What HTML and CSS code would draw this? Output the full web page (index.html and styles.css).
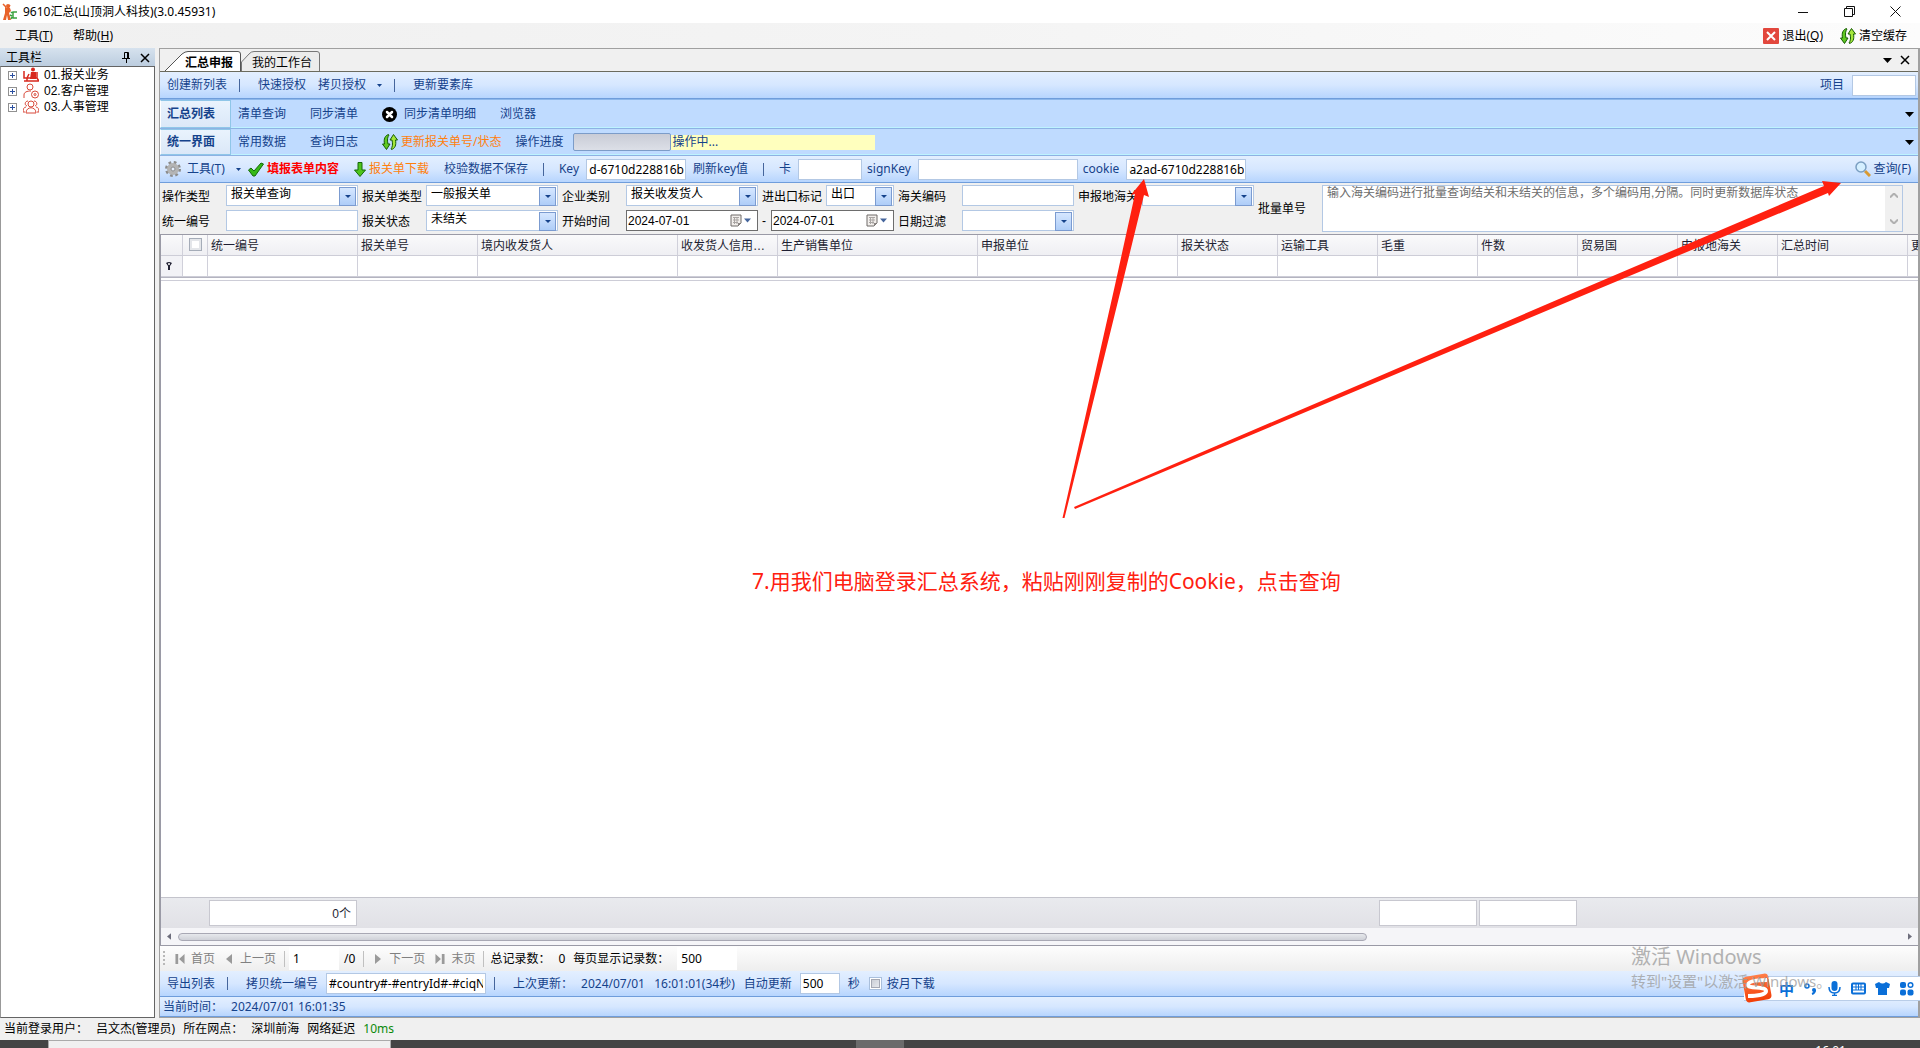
FILE: index.html
```html
<!DOCTYPE html>
<html lang="zh-CN">
<head>
<meta charset="utf-8">
<title>9610汇总(山顶洞人科技)(3.0.45931)</title>
<link rel="stylesheet" href="styles.css">
</head>
<body>
<svg class="defs" aria-hidden="true">
  <defs>
    <linearGradient id="tile" x1="0" y1="0" x2="0" y2="1"><stop offset="0" stop-color="#ff7f4a"/><stop offset="1" stop-color="#f23d06"/></linearGradient>
    <symbol id="refresh" viewBox="0 0 16 16">
      <path d="M6.500 .5C3 1.500 1.500 5 2.500 10H.5L4.500 15.500L8 10H6C5 6 5.500 3 7 1Z" fill="#5fc921" stroke="#175c05"/>
      <path d="M9.500 15.500C13 14.500 14.500 11 13.500 6H15.500L11.500 .5L8 6H10C11 10 10.500 13 9 15Z" fill="#a4e63a" stroke="#175c05"/>
    </symbol>
    <symbol id="caret" viewBox="0 0 9 5"><path d="M0 0H9L4.500 5Z" fill="currentColor"/></symbol>
    <symbol id="cross" viewBox="0 0 10 10"><path d="M1 1L9 9M9 1L1 9" stroke="currentColor" stroke-width="1.500" fill="none"/></symbol>
    <symbol id="left" viewBox="0 0 6 10"><path d="M6 0V10L0 5Z" fill="currentColor"/></symbol>
    <symbol id="right" viewBox="0 0 6 10"><path d="M0 0V10L6 5Z" fill="currentColor"/></symbol>
    <symbol id="first" viewBox="0 0 10 11"><path d="M0 0H3V11H0ZM10 0V11L4 5.500Z" fill="currentColor"/></symbol>
    <symbol id="last" viewBox="0 0 10 11"><path d="M7 0H10V11H7ZM0 0V11L6 5.500Z" fill="currentColor"/></symbol>
    <symbol id="calendar" viewBox="0 0 12 13">
      <path d="M1 1H11V9L8 12H1Z" fill="#f2efec" stroke="#6f6a68"/><path d="M3 3.500H9M3 6H9M3 8.500H8M4.500 3V10M7 3V10" stroke="#a9a5a3" fill="none"/><path d="M8 12V9H11Z" fill="#8b8684"/>
    </symbol>
  </defs>
</svg>

<header class="titlebar">
  <svg class="app-icon" viewBox="0 0 16 18"><path d="M1 1L4 4M8 2L6 5" stroke="#e8622a" stroke-width="1.500"/><circle cx="6" cy="3" r="2" fill="#e8622a"/><path d="M3 4L8 5L9 8L7 10L9 17H6L5 12L4 17H1L3 10Z" fill="#e8622a"/><path d="M9 9L10 10M8 12L10 13M9 16L10 14M15 9H11V15H15" fill="none" stroke="#3aa33f" stroke-width="1.500"/></svg>
  <h1>9610汇总(山顶洞人科技)(3.0.45931)</h1>
  <button class="win" aria-label="最小化"><svg viewBox="0 0 11 11"><path d="M0 6.500H10" stroke="#111"/></svg></button>
  <button class="win" aria-label="还原"><svg viewBox="0 0 11 11"><path d="M.5 2.500H8.500V10.500H.5ZM2.500 2.500V.5H10.500V8.500H8.500" fill="none" stroke="#111"/></svg></button>
  <button class="win" aria-label="关闭"><svg viewBox="0 0 11 11"><path d="M.5 .5L10.500 10.500M10.500 .5L.5 10.500" stroke="#111"/></svg></button>
</header>

<nav class="menubar">
  <button>工具(<u>T</u>)</button>
  <button>帮助(<u>H</u>)</button>
  <span class="fill"></span>
  <button class="with-icon"><svg class="i16" viewBox="0 0 16 16"><rect width="16" height="16" rx="1" fill="#e2473d"/><path d="M4 4L12 12M12 4L4 12" stroke="#fff" stroke-width="2"/></svg>退出(<u>Q</u>)</button>
  <button class="with-icon"><svg class="i16"><use href="#refresh"/></svg>清空缓存</button>
</nav>

<div class="workspace">
  <aside class="dock">
    <div class="dock-head">
      <h2>工具栏</h2>
      <button aria-label="固定"><svg class="pin" viewBox="0 0 8 12"><path d="M2.500 .5H6.500V6.500H2.500ZM5.500 .5V6M0 6.500H8M4.500 7V11" fill="none" stroke="#000"/></svg></button>
      <button aria-label="关闭工具栏"><svg class="i10"><use href="#cross"/></svg></button>
    </div>
    <ul class="tree">
      <li><i class="expander"></i><svg class="i16" viewBox="0 0 16 16"><path d="M1 4V11H4V14H1M6 7L4 11H14L16 14H3M14 5V11" fill="none" stroke="#d8281e" stroke-width="1.500"/><circle cx="10" cy="2.500" r="2" fill="#d8281e"/><path d="M8 5H13L13 12H7Z" fill="#d8281e"/></svg><a href="#">01.报关业务</a></li>
      <li><i class="expander"></i><svg class="i16" viewBox="0 0 16 16"><g fill="none" stroke="#d8493a"><circle cx="7" cy="4" r="3"/><path d="M1 15V12C1 9 4 8 8 8"/><circle cx="12" cy="11.500" r="3.500"/><circle cx="12" cy="11.500" r="1"/></g></svg><a href="#">02.客户管理</a></li>
      <li><i class="expander"></i><svg class="i16" viewBox="0 0 16 16"><g fill="none" stroke="#d8493a"><circle cx="8" cy="5" r="3"/><path d="M3 14C3 7 13 7 13 14ZM4 7C1 6 2 2 5 2M12 7C15 6 14 2 11 2M2 13H0C0 10 1 8 3 8M14 13H16C16 10 15 8 13 8"/></g></svg><a href="#">03.人事管理</a></li>
    </ul>
  </aside>

  <main class="panel">
    <div class="doc-tabs">
      <button class="doc-tab doc-on"><svg viewBox="0 0 76 20" aria-hidden="true"><path d="M0 20L17 3Q20 .5 23 .5H73Q75.500 .5 75.500 3V20" fill="#fff" stroke="#555"/></svg><span>汇总申报</span></button>
      <button class="doc-tab"><svg viewBox="0 0 79 20" aria-hidden="true"><path d="M.5 20V11L8 3Q10 .5 13 .5H76Q78.500 .5 78.500 3V20" fill="#ececec" stroke="#777"/></svg><span>我的工作台</span></button>
      <span class="fill"></span>
      <button aria-label="窗口列表"><svg class="caret-big"><use href="#caret"/></svg></button>
      <button aria-label="关闭标签"><svg class="i10"><use href="#cross"/></svg></button>
    </div>

    <div class="bar bar-top">
      <button>创建新列表</button><i class="sep"></i>
      <button>快速授权</button>
      <button class="drop">拷贝授权<svg class="caret-sm"><use href="#caret"/></svg></button><i class="sep"></i>
      <button>更新要素库</button>
      <span class="fill"></span>
      <label for="project">项目</label><input id="project" class="box w64">
    </div>

    <div class="strip">
      <button class="sub-on">汇总列表</button>
      <button>清单查询</button>
      <button>同步清单</button>
      <button class="icon-gap"><svg class="i15" viewBox="0 0 15 15"><circle cx="7.500" cy="7.500" r="7.500" fill="#000"/><path d="M5 5L10 10M10 5L5 10" stroke="#fff" stroke-width="2.500" stroke-linecap="round"/></svg>同步清单明细</button>
      <button>浏览器</button>
      <span class="fill"></span>
      <svg class="caret-big"><use href="#caret"/></svg>
    </div>

    <div class="strip strip-low">
      <button class="sub-on">统一界面</button>
      <button>常用数据</button>
      <button>查询日志</button>
      <button class="icon-tight orange"><svg class="i16"><use href="#refresh"/></svg>更新报关单号/状态</button>
      <div class="progress"><span>操作进度</span><i class="meter"></i><output>操作中...</output></div>
      <span class="fill"></span>
      <svg class="caret-big"><use href="#caret"/></svg>
    </div>

    <div class="bar bar-tools">
      <button class="icon-six"><svg class="i16" viewBox="0 0 16 16"><circle cx="8" cy="8" r="6.500" fill="none" stroke="#8c8c8c" stroke-width="3" stroke-dasharray="2.600 2.500"/><circle cx="8" cy="8" r="4" fill="none" stroke="#b4b4b4" stroke-width="4"/><circle cx="8" cy="8" r="2" fill="#e6f0ff" stroke="#8c8c8c"/></svg>工具(T)<svg class="caret-sm"><use href="#caret"/></svg></button>
      <button class="icon-tight red tool-lead"><svg class="i16" viewBox="0 0 16 16"><path d="M.5 9L3 7L6 10L13 2L15.500 3L7 15H5Z" fill="#35b916" stroke="#14690a"/></svg>填报表单内容</button>
      <button class="icon-tight orange tool-mid"><svg class="i12" viewBox="0 0 12 15"><path d="M4 .5H8V8H11.500L6 14.500L.5 8H4Z" fill="#4fc51c" stroke="#14690a"/></svg>报关单下载</button>
      <button class="tool-mid">校验数据不保存</button><i class="sep tool-mid"></i>
      <label for="key" class="tool-mid">Key</label><input id="key" class="box w100 tail" value="ad-6710d228816b">
      <button>刷新key值</button><i class="sep tool-mid"></i>
      <label for="card" class="tool-mid">卡</label><input id="card" class="box w64">
      <label for="sign">signKey</label><input id="sign" class="box w160">
      <label for="cookie">cookie</label><input id="cookie" class="box w120 tail" value="ba2ad-6710d228816b">
      <span class="fill"></span>
      <button class="icon-tight"><svg class="i16" viewBox="0 0 16 16"><path d="M10 10L15 15" stroke="#d99a32" stroke-width="3"/><circle cx="6" cy="6" r="5" fill="#d5efff" stroke="#7b9fc2" stroke-width="1.500"/></svg>查询(F)</button>
    </div>

    <form class="filters">
      <label class="c1" for="op">操作类型</label>
      <span class="combo c2"><select id="op"><option>报关单查询</option></select></span>
      <label class="c3" for="kind">报关单类型</label>
      <span class="combo c4"><select id="kind"><option>一般报关单</option></select></span>
      <label class="c5" for="corp">企业类别</label>
      <span class="combo c6"><select id="corp"><option>报关收发货人</option></select></span>
      <label class="c7" for="ie">进出口标记</label>
      <span class="combo c8"><select id="ie"><option>出口</option></select></span>
      <label class="c9" for="hs">海关编码</label>
      <input class="box c10" id="hs">
      <label class="c11" for="port">申报地海关</label>
      <span class="combo c12"><select id="port"><option></option></select></span>

      <label class="c1 low" for="no">统一编号</label>
      <input class="box c2 low" id="no">
      <label class="c3 low" for="state">报关状态</label>
      <span class="combo c4 low"><select id="state"><option>未结关</option></select></span>
      <label class="c5 low" for="from">开始时间</label>
      <span class="date c6 low"><input id="from" value="2024-07-01"><svg class="cal"><use href="#calendar"/></svg><svg class="caret-date"><use href="#caret"/></svg></span>
      <span class="dash low">-</span>
      <span class="date until low"><input aria-label="结束时间" value="2024-07-01"><svg class="cal"><use href="#calendar"/></svg><svg class="caret-date"><use href="#caret"/></svg></span>
      <label class="c9 low" for="filter">日期过滤</label>
      <span class="combo c10 low"><select id="filter"><option></option></select></span>

      <label class="c13" for="batch">批量单号</label>
      <div class="batch">
        <textarea id="batch" placeholder="输入海关编码进行批量查询结关和未结关的信息，多个编码用,分隔。同时更新数据库状态"></textarea>
        <span class="vscroll"><svg viewBox="0 0 8 5"><path d="M0 4.500L4 .5L8 4.500" fill="none" stroke="#b0b0b0" stroke-width="2"/></svg><svg viewBox="0 0 8 5"><path d="M0 .5L4 4.500L8 .5" fill="none" stroke="#b0b0b0" stroke-width="2"/></svg></span>
      </div>
    </form>

    <section class="grid">
      <table>
        <colgroup><col class="k22"><col class="k25"><col class="k150"><col class="k120"><col class="k200"><col class="k100"><col class="k200"><col class="k200"><col class="k100"><col class="k100"><col class="k100"><col class="k100"><col class="k100"><col class="k100"><col class="k130"><col></colgroup>
        <thead><tr><th></th><th class="tick-cell"><input type="checkbox" class="tick" aria-label="全选"></th><th>统一编号</th><th>报关单号</th><th>境内收发货人</th><th>收发货人信用等级</th><th>生产销售单位</th><th>申报单位</th><th>报关状态</th><th>运输工具</th><th>毛重</th><th>件数</th><th>贸易国</th><th>申报地海关</th><th>汇总时间</th><th class="cut">更</th></tr></thead>
        <tbody><tr><td class="mark"><svg viewBox="0 0 6 8"><path d="M0 1Q3 -1 6 1L4 4V8H2V4Z" fill="#223"/><circle cx="3" cy="2" r="1" fill="#fff"/></svg></td><td></td><td></td><td></td><td></td><td></td><td></td><td></td><td></td><td></td><td></td><td></td><td></td><td></td><td></td><td></td></tr></tbody>
      </table>
      <div class="rows"></div>
      <div class="totals"><span class="sum s1">0个</span><span class="sum s2"></span><span class="sum s3"></span></div>
      <div class="hscroll"><svg class="arrow"><use href="#left"/></svg><div class="track"><i></i></div><svg class="arrow"><use href="#right"/></svg></div>
    </section>

    <div class="pager">
      <i class="grip"></i>
      <button disabled class="near"><svg class="i10"><use href="#first"/></svg>首页</button>
      <button disabled><svg class="i6"><use href="#left"/></svg>上一页</button><i class="rule"></i>
      <input class="page" aria-label="页码" value="1"><span class="of">/0</span><i class="rule"></i>
      <button disabled><svg class="i6"><use href="#right"/></svg>下一页</button>
      <button disabled class="near"><svg class="i10"><use href="#last"/></svg>末页</button><i class="rule"></i>
      <span class="total">总记录数：</span><span class="total">0</span>
      <label for="size">每页显示记录数：</label><input id="size" class="size" value="500">
    </div>

    <div class="bar bar-export">
      <button>导出列表</button><i class="sep"></i>
      <button>拷贝统一编号</button>
      <input class="box w160" aria-label="编号格式" value="#country#-#entryId#-#ciqNo#"><i class="sep"></i>
      <span>上次更新：</span><span class="stamp">2024/07/01&nbsp;&nbsp; 16:01:01(34秒)</span>
      <label for="auto">自动更新</label><input id="auto" class="box w40" value="500"><span class="unit">秒</span>
      <label class="check"><input type="checkbox" class="tick tick-gray">按月下载</label>
    </div>
    <div class="bar bar-clock"><span>当前时间：</span><time>2024/07/01 16:01:35</time></div>
  </main>
</div>

<footer class="status"><span>当前登录用户：</span><span>吕文杰(管理员)</span><span>所在网点：</span><span>深圳前海</span><span>网络延迟</span><span class="green">10ms</span></footer>
<div class="taskbar"><i class="search"></i><i class="app"></i><time>16:01</time></div>

<svg class="arrows" viewBox="0 0 1920 1048" aria-hidden="true"><path d="M1062.500 518L1115 285L1135 194L1131 195L1144 179L1149 197L1144 195L1122 285L1064.500 518Z" fill="#ff2010"/><path d="M1074 507L1580 290L1824 186L1822 181L1841 183L1829 196L1828 193L1596 290L1075 509Z" fill="#ff2010"/></svg>
<p class="note">7.用我们电脑登录汇总系统，粘贴刚刚复制的Cookie，点击查询</p>

<div class="ime">
  <svg class="sogou" viewBox="0 0 31 31"><rect x="2" y="2" width="26" height="26" rx="4" transform="rotate(-10 15 15)" fill="url(#tile)"/><path d="M25 7C15 7 6 8 6 12C6 16 24 13 24 18C24 22 14 23 6 23" fill="none" stroke="#fff" stroke-width="4"/></svg>
  <b>中</b>
  <svg class="i15" viewBox="0 0 15 15"><circle cx="4" cy="5" r="2" fill="none" stroke="#0a6fd8" stroke-width="1.500"/><circle cx="11" cy="9" r="2" fill="#0a6fd8"/><path d="M12 9Q12 12 9 13" stroke="#0a6fd8" stroke-width="2" fill="none"/></svg>
  <svg class="i15" viewBox="0 0 15 15"><rect x="4.500" width="6" height="10" rx="3" fill="#0a6fd8"/><path d="M2 6Q2 12 7.500 12Q13 12 13 6M7.500 12V15M5 14.500H10" stroke="#0a6fd8" stroke-width="1.500" fill="none"/></svg>
  <svg class="i15" viewBox="0 0 15 15"><rect x="1" y="2.500" width="13" height="10" rx="1" fill="#fff" stroke="#0a6fd8" stroke-width="2"/><path d="M2 6H13M2 9H13M5 3V9M7.500 3V9M10 3V9" stroke="#0a6fd8"/></svg>
  <svg class="i15" viewBox="0 0 15 15"><path d="M4 1Q7.500 4 11 1L15 3L14 7H12V14H3V7H1L0 3Z" fill="#0a6fd8"/></svg>
  <svg class="i15" viewBox="0 0 15 15"><g fill="#0a6fd8"><rect x="1" y="1" width="6" height="6" rx="2"/><rect x="1" y="8.500" width="6" height="6" rx="2"/><rect x="8.500" y="8.500" width="6" height="6" rx="2"/></g><circle cx="11.500" cy="4" r="2.300" fill="none" stroke="#0a6fd8" stroke-width="1.500"/></svg>
</div>
<div class="watermark"><strong>激活 Windows</strong><span>转到"设置"以激活 Windows。</span></div>
</body>
</html>
```
FILE: styles.css
```css
* { box-sizing: border-box; }
html, body { height: 100%; }
body {
  margin: 0; position: relative; overflow: hidden;
  display: flex; flex-direction: column;
  background: #f0f0f0; color: #000;
  font: 12px/16px "Noto Sans", "Noto Sans CJK SC", sans-serif;
}
h1, h2, p, ul { margin: 0; padding: 0; font: inherit; }
button { border: 0; padding: 0; background: none; color: inherit; font: inherit; white-space: nowrap; display: flex; align-items: center; }
input, select, textarea { margin: 0; font: inherit; color: #000; border-radius: 0; min-width: 0; }
a { color: inherit; text-decoration: none; }
i { display: block; font-style: normal; }
svg { display: block; flex: none; }
span, label { white-space: nowrap; }
.defs { position: absolute; width: 0; height: 0; }
.fill { flex: 1; }
.i6 { width: 6px; height: 10px; }
.i10 { width: 10px; height: 10px; }
.i12 { width: 12px; height: 15px; }
.i15 { width: 15px; height: 15px; }
.i16 { width: 16px; height: 16px; }
.caret-big { width: 9px; height: 5px; color: #000; }
.caret-sm { width: 5px; height: 3px; margin-left: 11px; }

/* window frame */
.titlebar { flex: none; height: 23px; display: flex; align-items: center; background: #fff; padding: 0 2px; }
.titlebar h1 { flex: 1; }
.app-icon { width: 16px; height: 18px; margin-right: 5px; }
.win { width: 46px; height: 22px; justify-content: center; }
.win svg { width: 11px; height: 11px; }
.menubar { flex: none; height: 25px; display: flex; align-items: center; gap: 20px; padding: 0 13px 0 15px; background: linear-gradient(90deg, #f0f0f0, #f4f4f4 50%, #fcfcfc); }
.with-icon svg { margin-right: 3px; }
.menubar .with-icon + .with-icon { margin-left: -3px; }
.workspace { flex: 1; min-height: 0; display: flex; gap: 4px; }

/* docked tool tree */
.dock { flex: none; width: 155px; display: flex; flex-direction: column; }
.dock-head { height: 18px; display: flex; align-items: center; gap: 10px; padding: 2px 5px 0 6px; background: linear-gradient(#d6e2ee, #bccddf); }
.dock-head h2 { flex: 1; }
.pin { width: 8px; height: 12px; }
.tree { flex: 1; list-style: none; background: #fff; border: 1px solid #646464; border-left-color: #999; font-family: "Liberation Sans", "Noto Sans CJK SC", sans-serif; }
.tree li { height: 16px; display: flex; align-items: center; padding-left: 7px; }
.tree a { margin-left: 5px; }
.expander { width: 9px; height: 9px; margin-right: 6px; border: 1px solid #919191; background: linear-gradient(#2b4fa0, #2b4fa0) center / 5px 1px no-repeat, linear-gradient(#2b4fa0, #2b4fa0) center / 1px 5px no-repeat, #fff; }

/* document panel */
.panel { flex: 1; min-width: 0; display: flex; flex-direction: column; border: 1px solid #a0a0a0; border-right-width: 2px; color: #15428b; }
.doc-tabs { flex: none; height: 23px; display: flex; align-items: center; padding: 0 8px 0 5px; border-bottom: 1px solid #6b6b5e; color: #000; gap: 8px; }
.doc-tab { align-self: flex-end; display: grid; height: 20px; }
.doc-tab svg, .doc-tab span { grid-area: 1 / 1; }
.doc-tab svg { width: 79px; height: 20px; }
.doc-tab span { text-align: right; padding: 4px 8px 0 0; }
.doc-tab + .doc-tab { margin-left: -8px; }
.doc-on { font-weight: bold; }
.doc-on svg { width: 76px; }

.bar { flex: none; display: flex; align-items: center; background: linear-gradient(#e3efff, #d6e7ff 50%, #b7d5fe); border-bottom: 1px solid #6f9ddb; }
.bar-top { height: 27px; padding: 0 2px 0 7px; gap: 12px; }
.bar-top .box { margin-left: -4px; }
.sep { width: 1px; height: 13px; background: #45659c; }
.bar-top .sep, .bar-export .sep { margin-right: 6px; }
.box { height: 21px; border: 1px solid #b3c8e4; background: #fff; padding: 0 2px; }
.w40 { width: 40px; } .w64 { width: 64px; } .w100 { width: 100px; } .w120 { width: 120px; } .w160 { width: 160px; }
.tail { direction: rtl; padding: 0 1px 0 2px; }

.strip { flex: none; height: 30px; display: flex; align-items: center; gap: 24px; padding-right: 4px; background: #bfdbff; border-top: 1px solid #8db7ea; border-bottom: 1px solid #8db2e3; box-shadow: inset 0 -1px #bdf3ff; }
.strip-low { height: 27px; border-top: 0; }
.sub-on { align-self: stretch; width: 71px; padding-left: 6px; margin-right: -17px; font-weight: bold; background: linear-gradient(#e9f3fd, #dbe8f8); border: 1px solid #8fc6e8; border-left-color: #fff; }
.icon-gap svg { margin-right: 7px; }
.icon-tight svg { margin-right: 3px; }
.orange { color: #ff7f0e; }
.red { color: #f00; font-weight: bold; }
.progress { display: flex; align-items: center; margin-left: -10px; }
.meter { width: 98px; height: 18px; margin-left: 9px; border: 1px solid #7c9cc8; border-radius: 2px; background: linear-gradient(#c9ccd6, #dcdfe7); }
.progress output { width: 204px; height: 15px; line-height: 14px; padding-left: 2px; background: #ffffbe; }

.bar-tools { height: 27px; padding: 0 7px 0 5px; gap: 7px; }
.icon-six svg:first-child { margin-right: 6px; }
.bar-tools .tool-mid { margin-left: 8px; }
.bar-tools .box + label { margin-left: -2px; }

/* query form */
.filters {
  flex: none; display: grid; align-items: center;
  grid-template-columns: 65px 132px 68px 132px 68px 132px 13px 55px 68px 68px 112px 68px 112px 68px 1fr;
  grid-template-rows: 21px 21px; row-gap: 4px; padding: 2px 15px 3px 1px; background: #f0f0f0; color: #000;
  font-family: "Liberation Sans", "Noto Sans CJK SC", sans-serif;
}
.filters > * { grid-row: 1; }
.filters > .low { grid-row: 2; }
.filters > label { padding: 2px 0 0 4px; }
.filters > .c1 { padding-left: 1px; grid-column: 1; }
.c2 { grid-column: 2; } .c3 { grid-column: 3; } .c4 { grid-column: 4; } .c5 { grid-column: 5; } .c6 { grid-column: 6; }
.c7 { grid-column: 7 / 9; } .c8 { grid-column: 9; } .c9 { grid-column: 10; } .c10 { grid-column: 11; }
.c11 { grid-column: 12; } .c12 { grid-column: 13; }
.filters > .c13 { grid-column: 14; grid-row: 1 / 3; }
.batch { grid-column: 15; grid-row: 1 / 3; }
.filters .box { width: 100%; }
.dash { grid-column: 7; padding-left: 4px; }
.until { grid-column: 8 / 10; }
.combo { position: relative; height: 21px; border: 1px solid #b3c8e4; background: #fff; }
.combo select { width: 100%; height: 18px; appearance: none; border: 0; background: none; padding: 0 18px 2px 4px; line-height: 16px; }
.combo::before { content: ""; position: absolute; right: 1px; top: 1px; width: 15px; height: 17px; border: 1px solid #7b9bd0; background: linear-gradient(#d6e7ff, #aecdf8); }
.combo::after { content: ""; position: absolute; right: 6px; top: 9px; border: solid transparent; border-width: 3px 3px 0; border-top-color: #15428b; }
.date { height: 21px; display: flex; align-items: center; gap: 2px; border: 1px solid #6d6d6d; background: #fff; padding-right: 6px; }
.date input { flex: 1; width: 0; border: 0; padding: 0 0 0 1px; height: 17px; }
.cal { width: 12px; height: 13px; }
.caret-date { width: 7px; height: 5px; color: #45659c; }
.batch { height: 47px; display: flex; border: 1px solid #b3c8e4; background: #fff; }
.batch textarea { flex: 1; border: 0; padding: 0 4px; resize: none; overflow: hidden; line-height: 15px; outline: 0; background: none; }
.batch textarea::placeholder { color: #6d6d6d; }
.vscroll { width: 17px; display: flex; flex-direction: column; justify-content: space-between; align-items: center; padding: 7px 0; background: #f0f0f0; }
.vscroll svg { width: 8px; height: 5px; }

/* result grid */
.grid { flex: 1; min-height: 0; display: flex; flex-direction: column; border: 1px solid #9a9aa6; border-width: 1px 0 1px 1px; background: #fff; color: #1e1e32; font-family: "Liberation Sans", "Noto Sans CJK SC", sans-serif; }
table { width: 100%; table-layout: fixed; border-collapse: separate; border-spacing: 0; border-bottom: 1px solid #b4b4c0; }
.k22 { width: 22px; } .k25 { width: 25px; } .k100 { width: 100px; } .k120 { width: 120px; } .k130 { width: 130px; } .k150 { width: 150px; } .k200 { width: 200px; }
th, td { height: 21px; padding: 0 3px; border-right: 1px solid #d0d0da; border-bottom: 1px solid #cdcdd7; text-align: left; font-weight: normal; overflow: hidden; white-space: nowrap; text-overflow: ellipsis; }
th { background: linear-gradient(#fafafb, #efeff3); padding-top: 1px; }
th:last-child, td:last-child { border-right: 0; }
.cut { text-overflow: clip; padding-right: 0; }
.mark { background: #f2f2f6; padding: 0 5px; }
.mark svg { width: 6px; height: 8px; }
.tick-cell { padding: 0 6px 1px; }
.tick { appearance: none; display: block; flex: none; width: 13px; height: 13px; border: 1px solid #a5acb8; background: #fff; box-shadow: inset 0 0 0 2px #e4e6ea; }
.tick-gray { border-color: #a9bfdc; background: linear-gradient(135deg, #c4c8d0, #eef0f4); box-shadow: inset 0 0 0 1px #fff, inset 0 0 0 2px #a5a9b4; }
.rows { flex: 1; margin-top: 2px; border-top: 1px solid #cdcdd7; }
.totals { flex: none; height: 31px; display: grid; grid-template-columns: 48px 148px 1022px 98px 2px 98px; align-items: center; border-top: 1px solid #c4c4cc; background: linear-gradient(#e9eaee, #e1e1e6); }
.sum { height: 26px; border: 1px solid #c8c8d0; background: #fff; text-align: right; line-height: 26px; padding-right: 5px; }
.s1 { grid-column: 2; } .s2 { grid-column: 4; } .s3 { grid-column: 6; }
.hscroll { flex: none; height: 17px; display: flex; align-items: center; gap: 7px; padding: 0 6px; background: #f5f5f8; }
.arrow { width: 4px; height: 7px; color: #6d6d7c; }
.track { flex: 1; }
.track i { width: 69%; height: 8px; border: 1px solid #a8a8b4; border-radius: 4px; background: linear-gradient(#e6e8ec, #cfd1d8); }

.pager { flex: none; height: 25px; display: flex; align-items: center; padding-left: 3px; gap: 8px; background: linear-gradient(#fdfdfd, #eeeeee); color: #000; }
.pager button { color: #808080; gap: 8px; padding-left: 3px; }
.pager .near { gap: 6px; padding-left: 2px; }
.pager svg { color: #9a9a9a; }
.grip { width: 2px; height: 15px; background: repeating-linear-gradient(#b8b8b8 0 2px, transparent 2px 4px); }
.rule { width: 1px; height: 16px; background: #c0c0c0; }
.page, .size { height: 23px; border: 0; padding: 0 4px; background: #fff; }
.page { width: 50px; margin: 0 -3px 0 -4px; }
.size { width: 60px; }
.total { margin-left: -2px; }
.total + .total { margin-left: 0; }
.bar-export { height: 26px; padding: 0 7px; gap: 12px; }
.bar-export .box { margin: 0 -4px; }
.stamp { margin-left: -4px; margin-right: -3px; }
.check { display: flex; align-items: center; gap: 5px; margin-left: -3px; }
.bar-clock { height: 20px; padding: 0 3px; gap: 8px; }

/* window bottom */
.status { flex: none; height: 22px; display: flex; align-items: center; gap: 8px; padding: 0 4px; }
.green { color: #0a8a0a; }
.taskbar { flex: none; height: 8px; display: flex; background: #444; overflow: hidden; color: #fff; padding: 0 74px 0 48px; }
.taskbar .search { width: 343px; background: #f0f0f0; border: 1px solid #aaa; border-bottom: 0; }
.taskbar .app { width: 48px; margin-left: 465px; background: #6b6b6b; }
.taskbar time { margin-left: auto; padding-top: 3px; }

/* layers above the window */
.arrows { position: absolute; left: 0; top: 0; width: 1920px; height: 1048px; pointer-events: none; }
.note { position: absolute; left: 752px; top: 565px; font-size: 21px; line-height: 32px; color: #ff2010; white-space: nowrap; }
.ime { position: absolute; right: 0; bottom: 47px; width: 176px; height: 25px; display: flex; align-items: center; gap: 9px; padding-right: 5px; background: #fff; border: solid #b9cde8; border-width: 1px 0; color: #0a6fd8; }
.ime b { font-size: 15px; }
.sogou { width: 31px; height: 31px; margin: 0 -3px 0 -2px; }
.watermark { position: absolute; left: 1631px; top: 944px; display: flex; flex-direction: column; color: #9b9b9b; opacity: .75; font-size: 15px; line-height: 22px; pointer-events: none; }
.watermark strong { font-weight: normal; font-size: 20px; line-height: 26px; }
```
